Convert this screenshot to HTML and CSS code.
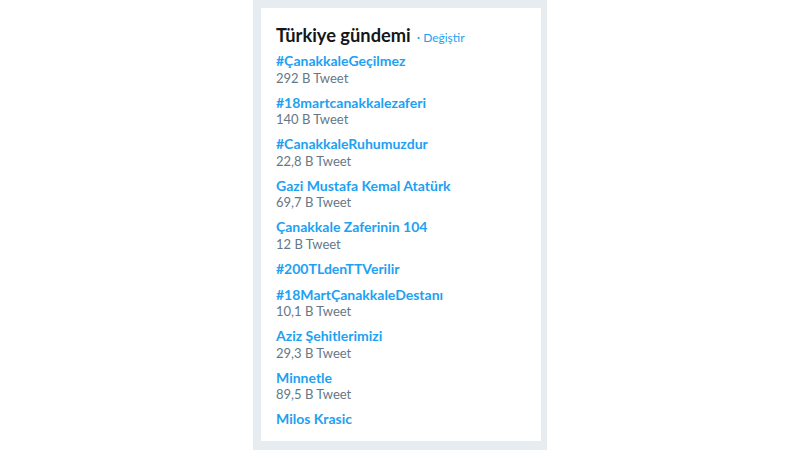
FILE: index.html
```html
<!DOCTYPE html>
<html lang="tr">
<head>
<meta charset="utf-8">
<link rel="stylesheet" href="styles.css">
</head>
<body>
<div class="panel">
  <div class="card">
    <div class="header">
      <h2 class="title">Türkiye gündemi</h2>
      <span class="sep">·</span>
      <a class="change">Değiştir</a>
    </div>
    <ul class="trends">
      <li class="trend"><span class="name">#ÇanakkaleGeçilmez</span><span class="count">292 B Tweet</span></li>
      <li class="trend"><span class="name">#18martcanakkalezaferi</span><span class="count">140 B Tweet</span></li>
      <li class="trend"><span class="name">#CanakkaleRuhumuzdur</span><span class="count">22,8 B Tweet</span></li>
      <li class="trend"><span class="name">Gazi Mustafa Kemal Atatürk</span><span class="count">69,7 B Tweet</span></li>
      <li class="trend"><span class="name">Çanakkale Zaferinin 104</span><span class="count">12 B Tweet</span></li>
      <li class="trend"><span class="name">#200TLdenTTVerilir</span></li>
      <li class="trend"><span class="name">#18MartÇanakkaleDestanı</span><span class="count">10,1 B Tweet</span></li>
      <li class="trend"><span class="name">Aziz Şehitlerimizi</span><span class="count">29,3 B Tweet</span></li>
      <li class="trend"><span class="name">Minnetle</span><span class="count">89,5 B Tweet</span></li>
      <li class="trend"><span class="name">Milos Krasic</span></li>
    </ul>
  </div>
</div>
</body>
</html>
```

FILE: styles.css
```css
html, body {
  margin: 0;
  padding: 0;
  background: #ffffff;
  height: 100%;
}
body {
  font-family: Lato, "Noto Sans", sans-serif;
  display: flex;
  justify-content: center;
}
.panel {
  width: 294px;
  height: 450px;
  box-sizing: border-box;
  background: #e6ecf0;
  padding: 8px 6px 8px 8px;
}
.card {
  background: #ffffff;
  padding: 15px 15px 9px 15px;
}
.header {
  display: flex;
  align-items: baseline;
  height: 24px;
  line-height: 24px;
}
.title {
  margin: 0;
  font-size: 18.3px;
  font-weight: 700;
  color: #14171a;
}
.sep {
  color: #1da1f2;
  font-size: 13px;
  margin: 0 3px 0 6px;
}
.change {
  color: #1da1f2;
  font-size: 12px;
}
.trends {
  list-style: none;
  margin: 0;
  padding: 1px 0 0 0;
}
.trend {
  display: flex;
  flex-direction: column;
  padding: 4px 0 4px 0;
}
.name {
  font-size: 14px;
  font-weight: 700;
  line-height: 18px;
  color: #1da1f2;
}
.count {
  font-size: 13px;
  line-height: 16px;
  margin-top: -0.5px;
  color: #657786;
}
```
